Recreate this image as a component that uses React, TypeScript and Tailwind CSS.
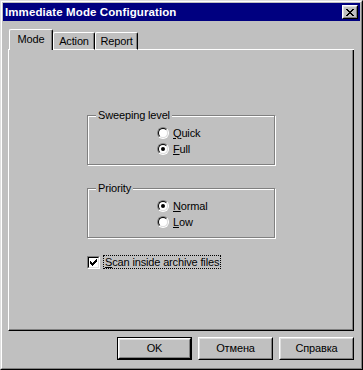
import React from 'react'

const CloseGlyph = () => (
  <svg width="8" height="7" viewBox="0 0 8 7" shapeRendering="crispEdges">
    <path
      d="M0 0h2v1H0zM6 0h2v1H6zM1 1h2v1H1zM5 1h2v1H5zM2 2h4v1H2zM3 3h2v1H3zM2 4h4v1H2zM1 5h2v1H1zM5 5h2v1H5zM0 6h2v1H0zM6 6h2v1H6z"
      fill="#000"
    />
  </svg>
)

const CheckGlyph = () => (
  <svg width="7" height="7" viewBox="0 0 7 7" shapeRendering="crispEdges">
    <path d="M6 0h1v1H6zM5 1h2v1H5zM0 2h1v1H0zM4 2h3v1H4zM0 3h2v1H0zM3 3h3v1H3zM0 4h5v1H0zM1 5h3v1H1zM2 6h1v1H2z" fill="#000" />
  </svg>
)

const Radio = ({ checked, label, hotkey }: { checked?: boolean; label: string; hotkey: number }) => (
  <div className="flex items-center h-[16px] gap-[4px]">
    <span className="w-[12px] h-[12px] rounded-full border border-[#808080] border-b-white border-r-white">
      <span className="flex items-center justify-center w-[10px] h-[10px] rounded-full border border-black border-b-[#dfdfdf] border-r-[#dfdfdf] bg-white">
        {checked && <span className="w-[4px] h-[4px] rounded-full bg-black" />}
      </span>
    </span>
    <span>
      {label.slice(0, hotkey)}
      <span className="underline">{label[hotkey]}</span>
      {label.slice(hotkey + 1)}
    </span>
  </div>
)

const GroupBox = ({ title, children }: { title: string; children: React.ReactNode }) => (
  <div className="relative w-[188px] h-[50px] border border-[#808080] shadow-[inset_1px_1px_0_#fff,1px_1px_0_#fff]">
    <span className="absolute top-[-7px] left-[8px] px-[2px] bg-[#c0c0c0] leading-[13px]">{title}</span>
    <div className="flex flex-col pl-[69px] pt-[9px]">{children}</div>
  </div>
)

const Button = ({ label, primary }: { label: string; primary?: boolean }) => (
  <div className={primary ? 'w-[75px] h-[23px] border border-black' : 'w-[75px] h-[23px]'}>
    <div className="h-full border border-white border-r-black border-b-black">
      <div className="h-full flex items-center justify-center border border-[#dfdfdf] border-r-[#808080] border-b-[#808080]">
        {label}
      </div>
    </div>
  </div>
)

export default function App() {
  return (
    <div className="w-[363px] h-[370px] bg-[#c0c0c0] border border-[#dfdfdf] border-r-black border-b-black font-['Liberation_Sans',Arial,sans-serif] text-[11px] leading-[13px] tracking-[-0.15px] text-black select-none">
      <div className="h-full flex flex-col p-px border border-white border-r-[#808080] border-b-[#808080]">
        {/* title bar */}
        <div className="h-[18px] flex items-center justify-between bg-[#000080] pl-[2px] pr-[2px]">
          <span className="text-white font-bold text-[11.5px] tracking-[0.1px]">Immediate Mode Configuration</span>
          <div className="w-[16px] h-[14px] bg-[#c0c0c0] border border-white border-r-black border-b-black">
            <div className="h-full flex items-center justify-center border border-[#dfdfdf] border-r-[#808080] border-b-[#808080] pt-px">
              <CloseGlyph />
            </div>
          </div>
        </div>

        {/* tabs */}
        <div className="flex items-end h-[21px] mt-[8px] ml-[5px] mr-[6px]">
          <div className="w-px h-px bg-white" />
          <div className="w-[44px] h-[21px] flex justify-center pt-[3px] border-t border-l border-r border-white border-r-black rounded-t-[2px] shadow-[inset_-1px_0_0_#808080]">
            Mode
          </div>
          <div className="w-[42px] h-[18px] flex justify-center pt-[2px] border border-white border-r-black rounded-t-[2px] shadow-[inset_-1px_0_0_#808080]">
            Action
          </div>
          <div className="w-[43px] h-[18px] flex justify-center pt-[2px] border border-white border-r-black rounded-t-[2px] shadow-[inset_-1px_0_0_#808080]">
            Report
          </div>
          <div className="flex-1 h-px bg-white" />
        </div>

        {/* tab panel */}
        <div className="h-[281px] ml-[5px] mr-[6px] border-l border-r border-b border-white border-r-black border-b-black shadow-[inset_-1px_-1px_0_#808080]">
          <div className="w-[188px] mx-auto mt-[65px] flex flex-col">
            <GroupBox title="Sweeping level">
              <Radio label="Quick" hotkey={0} />
              <Radio label="Full" hotkey={0} checked />
            </GroupBox>
            <div className="mt-[23px]">
              <GroupBox title="Priority">
                <Radio label="Normal" hotkey={0} checked />
                <Radio label="Low" hotkey={0} />
              </GroupBox>
            </div>
            <div className="flex items-center gap-[3px] mt-[17px]">
              <span className="w-[13px] h-[13px] border border-[#808080] border-b-white border-r-white">
                <span className="flex items-center justify-center w-[11px] h-[11px] border border-black border-b-[#dfdfdf] border-r-[#dfdfdf] bg-white">
                  <CheckGlyph />
                </span>
              </span>
              <span className="border border-dotted border-black px-px leading-[12px]">
                <span className="underline">S</span>can inside archive files
              </span>
            </div>
          </div>
        </div>

        {/* buttons */}
        <div className="flex justify-end gap-[6px] mt-[6px] mr-[6px]">
          <Button label="OK" primary />
          <Button label="Отмена" />
          <Button label="Справка" />
        </div>
      </div>
    </div>
  )
}
